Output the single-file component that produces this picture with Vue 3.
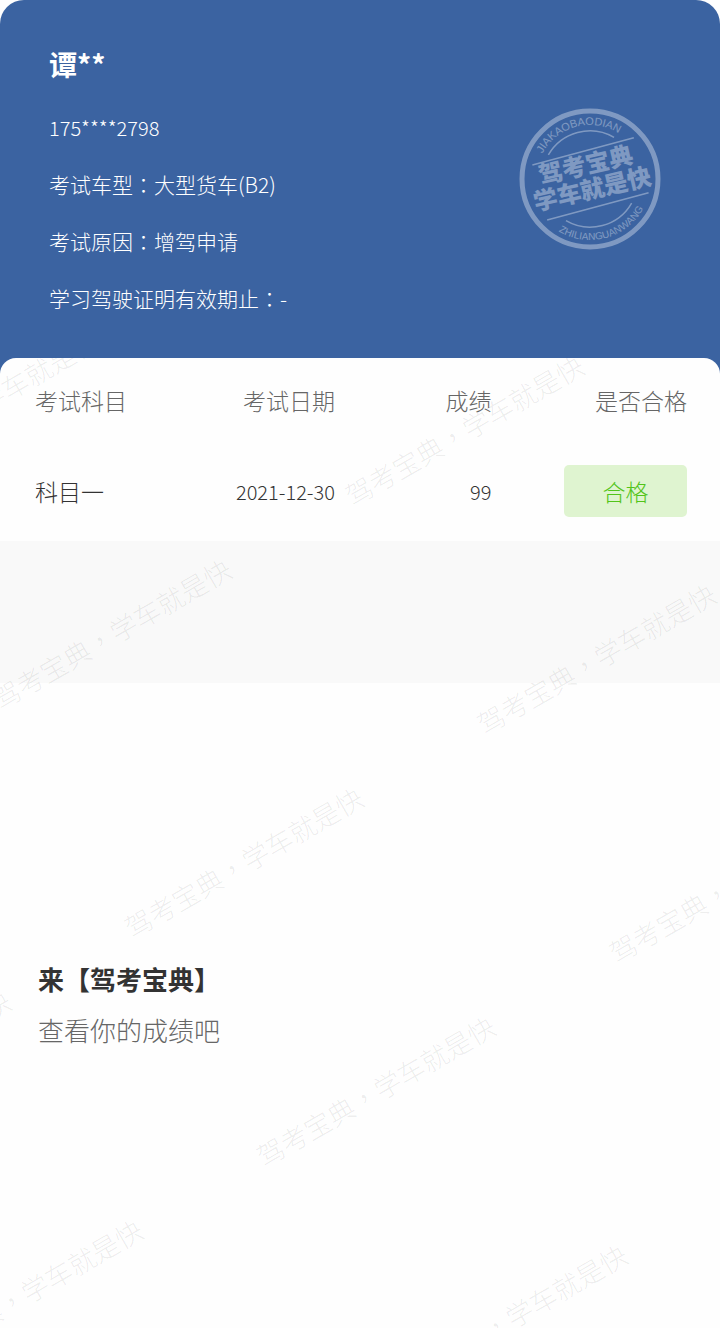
<script setup>
import { ref } from "vue";

const name = ref("谭**");
const phone = ref("175****2798");
const infoList = ref([
  "考试车型：大型货车(B2)",
  "考试原因：增驾申请",
  "学习驾驶证明有效期止：-",
]);
const results = ref([
  { subject: "科目一", date: "2021-12-30", score: 99, status: "合格" },
]);

// column and row steps of the tilted watermark grid
const stepX = 407;
const stepY = 264;
const marks = [
  [-1, -1],
  [0, 0],
  [-1, 0],
  [0, 1],
  [-1, 1],
  [0, 2],
  [-2, 1],
  [-1, 2],
  [-2, 2],
  [-1, 3],
];
</script>

<template>
  <main class="page">
    <header class="profile">
      <div class="info">
        <h1>{{ name }}</h1>
        <p class="phone">{{ phone }}</p>
        <p v-for="item in infoList" :key="item">{{ item }}</p>
      </div>
      <svg class="stamp" viewBox="-72 -72 144 144">
        <defs>
          <path id="arc-top" d="M-54 0A54 54 0 0 1 54 0" />
          <path id="arc-bottom" d="M-61 0A61 61 0 0 0 61 0" />
        </defs>
        <circle class="line ring" r="68" />
        <g transform="rotate(-15)">
          <path class="line" d="M-34 -34A48 48 0 0 1 34 -34" />
          <path class="line" d="M-34 34A48 48 0 0 0 34 34" />
          <path class="line" d="M-52 -28.5H53M-52 28.5H53" />
          <text class="latin latin-top">
            <textPath href="#arc-top" startOffset="50%">JIAKAOBAODIAN</textPath>
          </text>
          <text class="latin">
            <textPath href="#arc-bottom" startOffset="50%">
              ZHILIANGUANWANG
            </textPath>
          </text>
        </g>
        <g transform="rotate(-13)">
          <text class="slogan" x="-1" y="-6">驾考宝典</text>
          <text class="slogan" x="0" y="19">学车就是快</text>
        </g>
      </svg>
    </header>

    <div class="content">
      <section class="panel">
        <table>
          <thead>
            <tr>
              <th class="subject">考试科目</th>
              <th class="date">考试日期</th>
              <th class="score">成绩</th>
              <th class="status">是否合格</th>
            </tr>
          </thead>
          <tbody>
            <tr v-for="item in results" :key="item.subject">
              <td class="subject">{{ item.subject }}</td>
              <td class="date number">{{ item.date }}</td>
              <td class="score number">{{ item.score }}</td>
              <td class="status">
                <span class="badge">{{ item.status }}</span>
              </td>
            </tr>
          </tbody>
        </table>
      </section>
      <div class="divider"></div>
      <section class="promo">
        <h2>来【驾考宝典】</h2>
        <p>查看你的成绩吧</p>
      </section>
      <svg class="watermark" aria-hidden="true">
        <g transform="translate(359 134) rotate(-30)">
          <text
            v-for="[col, row] in marks"
            :key="`${col}-${row}`"
            :x="col * stepX - 13"
            :y="row * stepY + 10"
          >
            驾考宝典，学车就是快
          </text>
        </g>
      </svg>
    </div>
  </main>
</template>

<style>
body {
  margin: 0;
  background: #fefefe;
}
</style>

<style scoped>
/* the TC face centres the full-width colon and comma in their cell */
.page {
  display: flex;
  flex-direction: column;
  min-height: 100vh;
  font-family: "Noto Sans CJK TC", "Noto Sans CJK SC", sans-serif;
  font-weight: 300;
  color: #333;
}

h1,
h2,
p {
  margin: 0;
}

.profile {
  display: flex;
  justify-content: space-between;
  align-items: flex-start;
  padding: 29px 58px 47px 49px;
  border-radius: 24px 24px 0 0;
  background: #3b63a1;
  color: #fff;
}

.info h1 {
  font-size: 28px;
  line-height: 70px;
  font-weight: 700;
}

.info p {
  font-size: 21px;
  line-height: 57px;
}

.info .phone {
  font-size: 20px;
}

.stamp {
  width: 144px;
  height: 144px;
  margin-top: 78px;
  opacity: 0.35;
  fill: #fff;
}

.line {
  fill: none;
  stroke: #fff;
  stroke-width: 1.5;
}

.ring {
  stroke-width: 5;
}

.latin {
  font-family: "Liberation Sans", sans-serif;
  font-size: 10px;
  font-weight: 400;
  text-anchor: middle;
}

.latin-top {
  font-size: 11px;
}

.slogan {
  font-family: "Noto Sans CJK SC", sans-serif;
  font-size: 24px;
  font-weight: 900;
  text-anchor: middle;
}

.content {
  position: relative;
  flex: 1;
  margin-top: -16px;
  border-radius: 16px 16px 0 0;
  background: #fefefe;
  overflow: hidden;
}

.panel {
  padding: 0 33px 24px;
}

table {
  width: 100%;
  table-layout: fixed;
  border-collapse: collapse;
  font-size: 23px;
}

th,
td {
  padding: 0;
  text-align: right;
  white-space: nowrap;
}

th {
  height: 84px;
  font-weight: 300;
  color: #666;
}

td {
  height: 52px;
  padding-top: 23px;
}

.number {
  font-size: 20px;
}

.subject {
  width: 23%;
  padding-left: 2px;
  text-align: left;
}

.date {
  width: 23%;
}

.score {
  width: 24%;
}

.status {
  width: 30%;
}

.badge {
  display: inline-block;
  width: 123px;
  border-radius: 5px;
  background: #dff4d0;
  color: #52c41a;
  line-height: 52px;
  text-align: center;
  vertical-align: top;
}

.divider {
  height: 142px;
  background: #f9f9f9;
}

.promo {
  padding: 270px 38px 40px;
  font-size: 26px;
  line-height: 51px;
}

.promo h2 {
  font-size: 26px;
  font-weight: 700;
}

.promo p {
  color: #666;
}

.watermark {
  position: absolute;
  inset: 0;
  width: 100%;
  height: 100%;
  font-size: 27px;
  fill: rgba(0, 0, 0, 0.08);
  pointer-events: none;
}
</style>
